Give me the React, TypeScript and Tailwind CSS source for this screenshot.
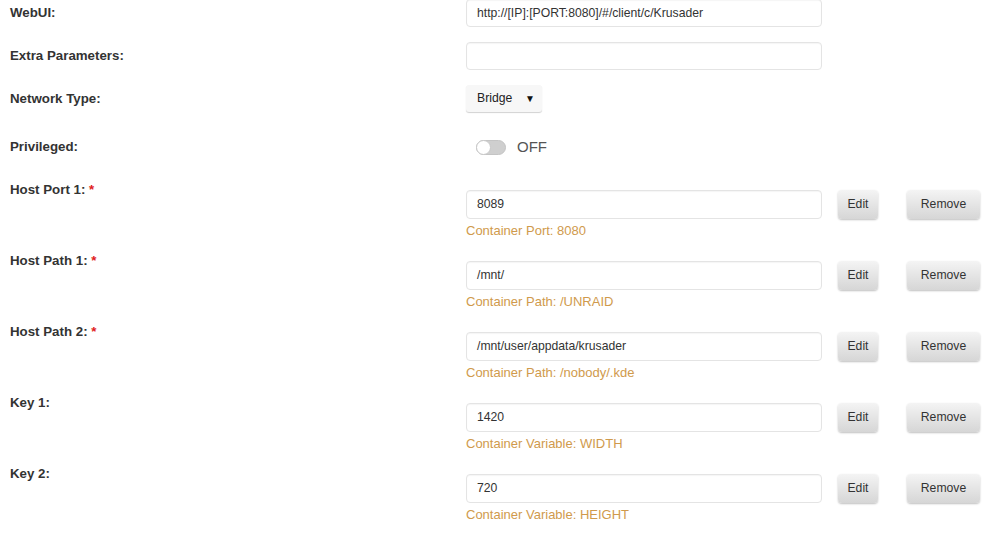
import React from "react";

type HostRow = {
  label: string;
  required: boolean;
  value: string;
  note: string;
};

const hostRows: HostRow[] = [
  { label: "Host Port 1:", required: true, value: "8089", note: "Container Port: 8080" },
  { label: "Host Path 1:", required: true, value: "/mnt/", note: "Container Path: /UNRAID" },
  { label: "Host Path 2:", required: true, value: "/mnt/user/appdata/krusader", note: "Container Path: /nobody/.kde" },
  { label: "Key 1:", required: false, value: "1420", note: "Container Variable: WIDTH" },
  { label: "Key 2:", required: false, value: "720", note: "Container Variable: HEIGHT" },
];

const inputCls =
  "w-[356px] h-[28px] px-[10px] rounded-[4px] border border-[#e4e4e4] bg-white text-[12.2px] text-[#333] flex items-center shadow-[inset_0_1px_1px_rgba(0,0,0,0.04)]";

const btnCls =
  "h-[29px] rounded-[4px] bg-gradient-to-b from-[#f4f4f4] to-[#d6d6d6] text-[12.2px] text-[#333] flex items-center justify-center shadow-[0_1px_2px_rgba(0,0,0,0.25)]";

const Label: React.FC<{ text: string; required?: boolean; className?: string }> = ({ text, required, className }) => (
  <div className={"w-[466px] shrink-0 pl-[10px] text-[13.3px] font-bold text-[#333] leading-[16px] " + (className || "")}>
    {text}
    {required && <span className="text-[#e02020]"> *</span>}
  </div>
);

export default function App() {
  return (
    <div className="w-[1000px] h-[539px] bg-white overflow-hidden font-['Liberation_Sans',Arial,sans-serif]">
      <div className="-mt-px">
        {/* WebUI */}
        <div className="flex items-center h-[43px] pb-[15px]">
          <Label text="WebUI:" />
          <div className={inputCls}>http://[IP]:[PORT:8080]/#/client/c/Krusader</div>
        </div>

        {/* Extra params */}
        <div className="flex items-center h-[43px] pb-[15px]">
          <Label text="Extra Parameters:" />
          <div className={inputCls}></div>
        </div>

        {/* Network type */}
        <div className="flex items-start h-[54px]">
          <Label text="Network Type:" className="mt-[6px]" />
          <div className="w-[76px] h-[27px] rounded-[3px] bg-[#f7f7f7] shadow-[0_1px_1px_rgba(0,0,0,0.18)] flex items-center justify-between pl-[11px] pr-[7px] text-[12.2px] text-[#222]">
            <span>Bridge</span>
            <span className="text-[10px] text-[#111]">▼</span>
          </div>
        </div>

        {/* Privileged */}
        <div className="flex items-start h-[51px]">
          <Label text="Privileged:" />
          <div className="flex items-center pl-[10px] -mt-[1px]">
            <div className="relative w-[30px] h-[15px] rounded-full bg-[#cfcfcf] border border-[#c4c4c4]">
              <div className="absolute left-[-1px] top-[-1px] w-[15px] h-[15px] rounded-full bg-white border border-[#c8c8c8]"></div>
            </div>
            <span className="ml-[11px] text-[15px] text-[#555] leading-[18px]">OFF</span>
          </div>
        </div>

        {/* Host rows */}
        {hostRows.map((row, i) => (
          <div key={i} className="flex items-start h-[71px]">
            <Label text={row.label} required={row.required} className="-mt-[8px]" />
            <div className="flex flex-col">
              <div className="flex items-center">
                <div className={inputCls + " h-[29px]"}>{row.value}</div>
                <div className={btnCls + " w-[40px] ml-[16px]"}>Edit</div>
                <div className={btnCls + " w-[73px] ml-[29px]"}>Remove</div>
              </div>
              <div className="mt-[4px] text-[13px] leading-[16px] text-[#d09a4c]">{row.note}</div>
            </div>
          </div>
        ))}
      </div>
    </div>
  );
}
